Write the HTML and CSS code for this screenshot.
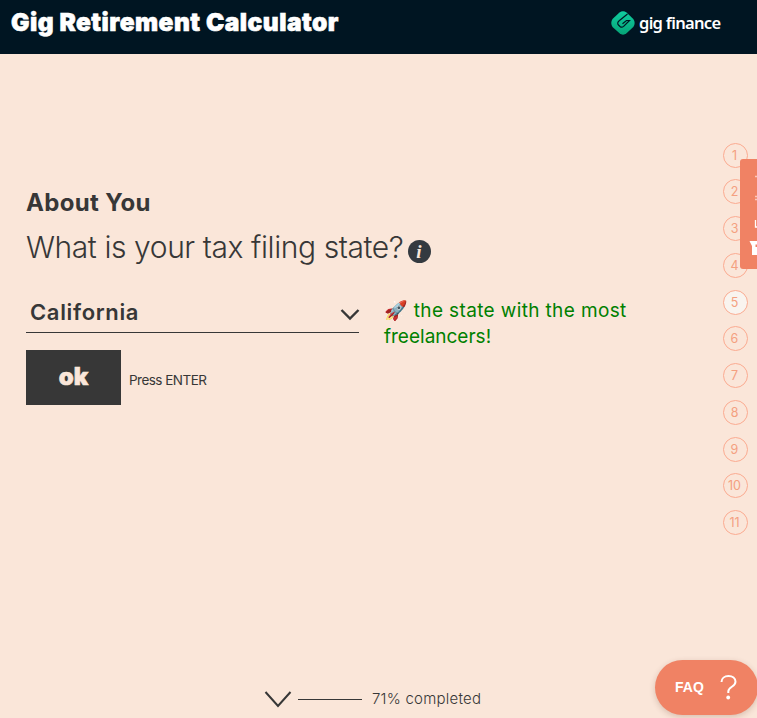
FILE: index.html
```html
<!DOCTYPE html>
<html lang="en">
<head>
<meta charset="utf-8">
<title>Gig Retirement Calculator</title>
<link rel="stylesheet" href="styles.css">
</head>
<body>
<header class="topbar">
  <h1 class="title">Gig Retirement Calculator</h1>
  <div class="brand">
    <svg class="brand-mark" viewBox="0 0 24 24" width="24" height="24">
      <defs><linearGradient id="g" x1="0" y1="0" x2="0" y2="1"><stop offset="0" stop-color="#10cda0"/><stop offset="1" stop-color="#06a477"/></linearGradient></defs>
      <path d="M8.500 1.500Q12-1 15.500 1.500L22.300 8Q25 12 22.300 16L15.500 22.300Q12 25 8.500 22.300L1.500 16Q-1 12 1.500 8Z" fill="url(#g)"/>
      <path d="M16.500 3 8.500 9.500Q5.500 11.800 7.500 14L9 15.500Q10.800 17 12.600 15.400L18.500 9.500H15.500L11.500 12.800" fill="none" stroke="#001522" stroke-width="1.200"/>
    </svg>
    <span class="brand-name">gig finance</span>
  </div>
</header>
<main class="page">
  <section class="question">
    <h2 class="section-name">About You</h2>
    <div class="prompt">
      <p class="prompt-text">What is your tax filing state?</p>
      <span class="info">i</span>
    </div>
    <div class="answer">
      <div class="select">
        <span class="select-value">California</span>
        <svg class="caret" width="20" height="13" viewBox="0 0 20 13"><path d="M1.500 2 10 10.500 18.500 2" fill="none" stroke="#373737" stroke-width="2.400"/></svg>
      </div>
      <p class="hint"><span class="rocket">🚀</span> the state with the most<br><span class="hint-end">freelancers!</span></p>
    </div>
    <div class="actions">
      <button class="ok">ok</button>
      <span class="press">Press ENTER</span>
    </div>
  </section>
  <footer class="progress">
    <svg width="28" height="18" viewBox="0 0 28 18"><path d="M1.500 2 14 16 26.500 2" fill="none" stroke="#373737" stroke-width="2"/></svg>
    <span class="rule"></span>
    <span class="progress-text">71% completed</span>
  </footer>
</main>
<nav class="steps">
  <span class="step">1</span><span class="step">2</span><span class="step">3</span><span class="step">4</span><span class="step current">5</span><span class="step">6</span><span class="step">7</span><span class="step">8</span><span class="step">9</span><span class="step">10</span><span class="step">11</span>
</nav>
<aside class="side-tab">
  <svg width="17" height="110" viewBox="0 0 17 110"><path d="M15 17.500h2M15 37.500h2M15 40.500h2" stroke="#fac9bb" stroke-width="1.300"/><path d="M15.500 61v7H17" fill="none" stroke="#fff" stroke-width="1.300"/><path d="M9.500 82H17v3.500h-1.500v2.500H17v8h-5V87Z" fill="#fff"/></svg>
</aside>
<button class="faq"><span>FAQ</span>
  <svg width="18" height="26" viewBox="0 0 18 26"><path d="M1.500 8C1.500 4.500 4.500 2 8.500 2c4 0 7 2.300 7 5.800 0 5.200-7.200 4.700-7.200 9.700v1.500" fill="none" stroke="#fff" stroke-width="2"/><circle cx="8.200" cy="23.500" r="1.900" fill="#fff"/></svg>
</button>
</body>
</html>
```
FILE: styles.css
```css
* { box-sizing: border-box; }
body { margin: 0; height: 718px; overflow: hidden; position: relative; background: #fae6d9; color: #373737; font-family: Inter, sans-serif; }
h1, h2, p { margin: 0; }
svg { display: block; flex: none; }
.topbar { height: 54px; background: #001522; display: flex; justify-content: space-between; padding: 0 36px 0 11px; }
.title { font: 900 24.500px/45px Inter, sans-serif; color: #fff; letter-spacing: 0.480px; white-space: nowrap; -webkit-text-stroke: 0.600px #fff; }
.brand { display: flex; align-items: center; height: 45px; gap: 4px; }
.brand-name { font: 600 16.500px/24px "Noto Sans", sans-serif; color: #fff; width: 82px; white-space: nowrap; letter-spacing: -0.700px; font-variant-ligatures: none; }
.page { height: 664px; display: flex; flex-direction: column; justify-content: space-between; }
.question { padding: 132px 0 0 26px; }
.section-name { font: 700 24px/33px Inter, sans-serif; letter-spacing: 0.350px; height: 34px; }
.prompt { display: flex; align-items: center; margin-top: 6px; height: 44px; gap: 5px; }
.prompt-text { width: 377px; font: 300 30px/42px Inter, sans-serif; height: 44px; letter-spacing: -0.420px; white-space: nowrap; }
.info { width: 23px; height: 23px; margin-top: 6px; border-radius: 50%; background: #343a40; color: #fae6d9; font: italic 700 19px/23px "Liberation Serif", serif; text-align: center; padding-right: 1px; }
.answer { display: flex; align-items: flex-start; margin-top: 20px; height: 64px; gap: 25px; }
.select { width: 333px; height: 43px; border-bottom: 1px solid #373737; display: flex; justify-content: space-between; align-items: center; padding: 1px 0 0 4px; }
.select-value { font: 600 22px/30px Inter, sans-serif; letter-spacing: 0.650px; }
.caret { margin: 6px -1px 0 0; }
.hint { color: green; font: 400 19px/26px Inter, sans-serif; letter-spacing: 0.370px; margin-top: 8px; white-space: nowrap; }
.hint-end { letter-spacing: 0; }
.rocket { letter-spacing: 0; }
.actions { display: flex; align-items: center; gap: 8px; height: 55px; margin-top: -4px; }
.ok { width: 95px; height: 55px; border: 0; background: #373737; color: #fae6d9; font: 900 24px/53px Inter, sans-serif; padding: 0 0 2px; -webkit-text-stroke: 0.600px #fae6d9; }
.press { font: 400 13.500px/20px Inter, sans-serif; letter-spacing: -0.530px; margin-top: 5px; }
.progress { display: flex; align-items: center; height: 38px; padding-left: 264px; white-space: nowrap; }
.rule { width: 64px; height: 1px; background: #373737; margin: 0 10px 0 6px; }
.progress-text { font: 300 15px/20px Inter, sans-serif; letter-spacing: 0.230px; }
.steps { position: absolute; left: 723px; top: 142.600px; display: grid; grid-auto-rows: 36.750px; }
.step { width: 25px; height: 25px; border: 1px solid #faab91; border-radius: 50%; color: #f4a080; font: 400 12.500px/23px Inter, sans-serif; text-align: center; padding-right: 2px; }
.current { background: #f9f4ef; }
.side-tab { position: absolute; left: 740px; top: 159px; width: 17px; height: 110px; background: #f08264; border-radius: 3px 0 0 3px; }
.faq { position: absolute; left: 655px; top: 660px; width: 103px; height: 55px; border: 0; border-radius: 28px; background: #f08264; color: #fff; font: 700 14px/20px "Liberation Sans", sans-serif; display: flex; align-items: center; padding: 0 0 1px 20px; gap: 16px; box-shadow: 0 2px 6px rgba(80,30,10,.2); }
```
